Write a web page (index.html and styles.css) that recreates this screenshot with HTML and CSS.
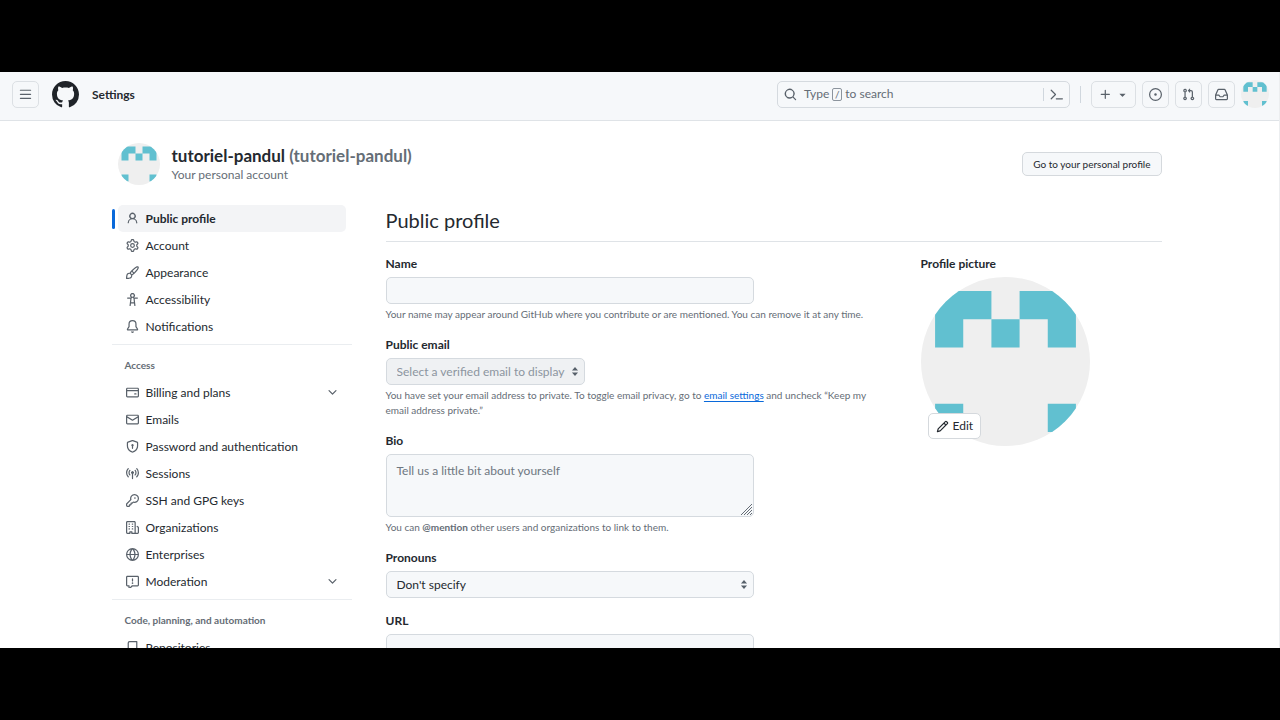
FILE: index.html
```html
<!DOCTYPE html>
<html lang="en">
<head>
<meta charset="utf-8">
<title>Public profile</title>
<link rel="stylesheet" href="styles.css">
</head>
<body>
<svg class="defs" aria-hidden="true">
  <defs>
    <symbol id="identicon" viewBox="0 0 420 420">
      <rect width="420" height="420" fill="#efefef"/>
      <path fill="#61c0d0" d="M35 35h140v70h-70v70H35zM245 35h140v140h-70v-70h-70zM175 105h70v70h-70zM35 315h70v70H35zM315 315h70v70h-70z"/>
    </symbol>
    <symbol id="chevron" viewBox="0 0 16 16"><path d="M12.78 5.22a.749.749 0 0 1 0 1.06l-4.25 4.25a.749.749 0 0 1-1.06 0L3.22 6.28a.749.749 0 1 1 1.06-1.06L8 8.939l3.72-3.719a.749.749 0 0 1 1.06 0Z"/></symbol>
    <symbol id="updown" viewBox="0 0 8 10"><path d="M4 0l3.4 4H.6zM4 10L.6 6h6.8z"/></symbol>
  </defs>
</svg>
<div class="frame">
  <header class="topbar">
    <button class="icon-btn" aria-label="Open menu"><svg class="icon" viewBox="0 0 16 16"><path d="M1 2.75A.75.75 0 0 1 1.75 2h12.5a.75.75 0 0 1 0 1.5H1.75A.75.75 0 0 1 1 2.75Zm0 5A.75.75 0 0 1 1.75 7h12.5a.75.75 0 0 1 0 1.5H1.75A.75.75 0 0 1 1 7.75ZM1.75 12h12.5a.75.75 0 0 1 0 1.5H1.75a.75.75 0 0 1 0-1.5Z"/></svg></button>
    <a class="logo" href="#" aria-label="Homepage"><svg viewBox="0 0 16 16"><path d="M8 0c4.42 0 8 3.58 8 8a8.013 8.013 0 0 1-5.45 7.59c-.4.08-.55-.17-.55-.38 0-.27.01-1.13.01-2.2 0-.75-.25-1.23-.54-1.48 1.78-.2 3.65-.88 3.65-3.95 0-.88-.31-1.59-.82-2.15.08-.2.36-1.02-.08-2.12 0 0-.67-.22-2.2.82-.64-.18-1.32-.27-2-.27-.68 0-1.36.09-2 .27-1.53-1.03-2.2-.82-2.2-.82-.44 1.1-.16 1.92-.08 2.12-.51.56-.82 1.28-.82 2.15 0 3.06 1.86 3.75 3.64 3.95-.23.2-.44.55-.51 1.07-.46.21-1.61.55-2.33-.66-.15-.24-.6-.83-1.23-.82-.67.01-.27.38.01.53.34.19.73.9.82 1.13.16.45.68 1.31 2.69.94 0 .67.01 1.3.01 1.49 0 .21-.15.45-.55.38A7.995 7.995 0 0 1 0 8c0-4.42 3.58-8 8-8Z"/></svg></a>
    <a class="crumb" href="#">Settings</a>
    <div class="search">
      <button class="search-main"><svg class="icon" viewBox="0 0 16 16"><path d="M10.68 11.74a6 6 0 0 1-7.922-8.982 6 6 0 0 1 8.982 7.922l3.04 3.04a.749.749 0 1 1-1.06 1.06ZM11.5 7a4.499 4.499 0 1 0-8.997 0A4.499 4.499 0 0 0 11.5 7Z"/></svg><span class="search-text">Type <kbd>/</kbd> to search</span></button>
      <button class="search-cmd" aria-label="Command palette"><svg class="icon" viewBox="0 0 16 16"><path d="M.97 2.22a.75.75 0 0 1 1.06 0l5.25 5.25a.75.75 0 0 1 0 1.06l-5.25 5.25a.75.75 0 0 1-1.06-1.06L5.69 8 .97 3.28a.75.75 0 0 1 0-1.06ZM7.75 12.5h7.5a.75.75 0 0 1 0 1.5h-7.5a.75.75 0 0 1 0-1.5Z"/></svg></button>
    </div>
    <span class="divider"></span>
    <nav class="actions">
      <button class="icon-btn wide" aria-label="Create new"><svg class="icon" viewBox="0 0 16 16"><path d="M7.75 2a.75.75 0 0 1 .75.75V7h4.25a.75.75 0 0 1 0 1.5H8.5v4.25a.75.75 0 0 1-1.5 0V8.5H2.75a.75.75 0 0 1 0-1.5H7V2.75A.75.75 0 0 1 7.75 2Z"/></svg><svg class="icon" viewBox="0 0 16 16"><path d="m4.427 7.427 3.396 3.396a.25.25 0 0 0 .354 0l3.396-3.396A.25.25 0 0 0 11.396 7H4.604a.25.25 0 0 0-.177.427Z"/></svg></button>
      <button class="icon-btn" aria-label="Issues"><svg class="icon" viewBox="0 0 16 16"><path d="M8 9.5a1.5 1.5 0 1 0 0-3 1.5 1.5 0 0 0 0 3Z"/><path d="M8 0a8 8 0 1 1 0 16A8 8 0 0 1 8 0ZM1.5 8a6.5 6.5 0 1 0 13 0 6.5 6.5 0 0 0-13 0Z"/></svg></button>
      <button class="icon-btn" aria-label="Pull requests"><svg class="icon" viewBox="0 0 16 16"><path d="M1.5 3.25a2.25 2.25 0 1 1 3 2.122v5.256a2.251 2.251 0 1 1-1.5 0V5.372A2.25 2.25 0 0 1 1.5 3.25Zm5.677-.177L9.573.677A.25.25 0 0 1 10 .854V2.5h1A2.5 2.5 0 0 1 13.5 5v5.628a2.251 2.251 0 1 1-1.5 0V5a1 1 0 0 0-1-1h-1v1.646a.25.25 0 0 1-.427.177L7.177 3.427a.25.25 0 0 1 0-.354ZM3.75 2.5a.75.75 0 1 0 0 1.5.75.75 0 0 0 0-1.5Zm0 9.5a.75.75 0 1 0 0 1.5.75.75 0 0 0 0-1.5Zm8.25.75a.75.75 0 1 0 1.5 0 .75.75 0 0 0-1.5 0Z"/></svg></button>
      <button class="icon-btn" aria-label="Notifications inbox"><svg class="icon" viewBox="0 0 16 16"><path d="M2.8 2.06A1.75 1.75 0 0 1 4.41 1h7.18c.7 0 1.333.417 1.61 1.06l2.74 6.395c.04.093.06.194.06.295v4.5A1.75 1.75 0 0 1 14.25 15H1.75A1.75 1.75 0 0 1 0 13.25v-4.5c0-.101.02-.202.06-.295Zm1.61.44a.25.25 0 0 0-.23.152L1.887 8H4.75a.75.75 0 0 1 .6.3L6.625 10h2.75l1.275-1.7a.75.75 0 0 1 .6-.3h2.863L11.82 2.652a.25.25 0 0 0-.23-.152Zm10.09 7h-2.875l-1.275 1.7a.75.75 0 0 1-.6.3h-3.5a.75.75 0 0 1-.6-.3L4.375 9.5H1.5v3.75c0 .138.112.25.25.25h12.5a.25.25 0 0 0 .25-.25Z"/></svg></button>
      <button class="avatar-btn" aria-label="User menu"><svg class="avatar"><use href="#identicon"/></svg></button>
    </nav>
  </header>

  <div class="page">
    <section class="account">
      <svg class="avatar medium"><use href="#identicon"/></svg>
      <div class="account-names">
        <h1>tutoriel-pandul <span>(tutoriel-pandul)</span></h1>
        <p>Your personal account</p>
      </div>
      <a class="btn" href="#">Go to your personal profile</a>
    </section>

    <div class="columns">
      <nav class="sidebar" aria-label="Settings">
        <ul>
          <li><a class="item active" href="#"><svg class="icon" viewBox="0 0 16 16"><path d="M10.561 8.073a6.005 6.005 0 0 1 3.432 5.142.75.75 0 1 1-1.498.07 4.5 4.5 0 0 0-8.99 0 .75.75 0 0 1-1.498-.07 6.004 6.004 0 0 1 3.431-5.142 3.999 3.999 0 1 1 5.123 0ZM10.5 5a2.5 2.5 0 1 0-5 0 2.5 2.5 0 0 0 5 0Z"/></svg><span>Public profile</span></a></li>
          <li><a class="item" href="#"><svg class="icon" viewBox="0 0 16 16"><path d="M8 0a8.2 8.2 0 0 1 .701.031C9.444.095 9.99.645 10.16 1.29l.288 1.107c.018.066.079.158.212.224.231.114.454.243.668.386.123.082.233.09.299.071l1.103-.303c.644-.176 1.392.021 1.82.63.27.385.506.792.704 1.218.315.675.111 1.422-.364 1.891l-.814.806c-.049.048-.098.147-.088.294.016.257.016.515 0 .772-.01.147.038.246.088.294l.814.806c.475.469.679 1.216.364 1.891a7.977 7.977 0 0 1-.704 1.217c-.428.61-1.176.807-1.82.63l-1.102-.302c-.067-.019-.177-.011-.3.071a5.909 5.909 0 0 1-.668.386c-.133.066-.194.158-.211.224l-.29 1.106c-.168.646-.715 1.196-1.458 1.26a8.006 8.006 0 0 1-1.402 0c-.743-.064-1.289-.614-1.458-1.26l-.289-1.106c-.018-.066-.079-.158-.212-.224a5.738 5.738 0 0 1-.668-.386c-.123-.082-.233-.09-.299-.071l-1.103.303c-.644.176-1.392-.021-1.82-.63a8.12 8.12 0 0 1-.704-1.218c-.315-.675-.111-1.422.363-1.891l.815-.806c.05-.048.098-.147.088-.294a6.214 6.214 0 0 1 0-.772c.01-.147-.038-.246-.088-.294l-.815-.806C.635 6.045.431 5.298.746 4.623a7.92 7.92 0 0 1 .704-1.217c.428-.61 1.176-.807 1.82-.63l1.102.302c.067.019.177.011.3-.071.214-.143.437-.272.668-.386.133-.066.194-.158.211-.224l.29-1.106C6.009.645 6.556.095 7.299.03 7.53.01 7.764 0 8 0Zm-.571 1.525c-.036.003-.108.036-.137.146l-.289 1.105c-.147.561-.549.967-.998 1.189-.173.086-.34.183-.5.29-.417.278-.97.423-1.529.27l-1.103-.303c-.109-.03-.175.016-.195.045-.22.312-.412.644-.573.99-.014.031-.021.11.059.19l.815.806c.411.406.562.957.53 1.456a4.709 4.709 0 0 0 0 .582c.032.499-.119 1.05-.53 1.456l-.815.806c-.081.08-.073.159-.059.19.162.346.353.677.573.989.02.03.085.076.195.046l1.102-.303c.56-.153 1.113-.008 1.53.27.161.107.328.204.501.29.447.222.85.629.997 1.189l.289 1.105c.029.109.101.143.137.146a6.6 6.6 0 0 0 1.142 0c.036-.003.108-.036.137-.146l.289-1.105c.147-.561.549-.967.998-1.189.173-.086.34-.183.5-.29.417-.278.97-.423 1.529-.27l1.103.303c.109.029.175-.016.195-.045.22-.313.411-.644.573-.99.014-.031.021-.11-.059-.19l-.815-.806c-.411-.406-.562-.957-.53-1.456a4.709 4.709 0 0 0 0-.582c-.032-.499.119-1.05.53-1.456l.815-.806c.081-.08.073-.159.059-.19a6.464 6.464 0 0 0-.573-.989c-.02-.03-.085-.076-.195-.046l-1.102.303c-.56.153-1.113.008-1.53-.27a4.44 4.44 0 0 0-.501-.29c-.447-.222-.85-.629-.997-1.189l-.289-1.105c-.029-.11-.101-.143-.137-.146a6.6 6.6 0 0 0-1.142 0ZM11 8a3 3 0 1 1-6 0 3 3 0 0 1 6 0ZM9.5 8a1.5 1.5 0 1 0-3.001.001A1.5 1.5 0 0 0 9.5 8Z"/></svg><span>Account</span></a></li>
          <li><a class="item" href="#"><svg class="icon" viewBox="0 0 16 16"><path d="M11.134 1.535c.7-.509 1.416-.942 2.076-1.155.649-.21 1.463-.267 2.069.34.603.601.568 1.411.368 2.07-.202.668-.624 1.39-1.125 2.096-1.011 1.424-2.496 2.987-3.775 4.249-1.098 1.084-2.132 1.839-3.04 2.3a3.744 3.744 0 0 1-1.055 3.217c-.431.431-1.065.691-1.657.861-.614.177-1.294.287-1.914.357A21.151 21.151 0 0 1 .797 16H.743l.007-.75H.749L.742 16a.75.75 0 0 1-.743-.742l.743-.008-.742.007v-.054a21.25 21.25 0 0 1 .13-2.284c.067-.647.187-1.287.358-1.914.17-.591.43-1.226.86-1.657a3.746 3.746 0 0 1 3.227-1.054c.466-.893 1.225-1.907 2.314-2.982 1.271-1.255 2.833-2.75 4.245-3.777ZM1.62 13.089c-.051.464-.086.929-.104 1.395.466-.018.932-.053 1.396-.104a10.511 10.511 0 0 0 1.668-.309c.526-.151.856-.325 1.011-.48a2.25 2.25 0 1 0-3.182-3.182c-.155.155-.329.485-.48 1.01a10.515 10.515 0 0 0-.309 1.67Zm10.396-10.34c-1.224.89-2.605 2.189-3.822 3.384l1.718 1.718c1.21-1.205 2.51-2.597 3.387-3.833.47-.662.78-1.227.912-1.662.134-.444.032-.551.009-.575h-.001V1.78c-.014-.014-.113-.113-.548.027-.432.14-.995.462-1.655.942Zm-4.832 7.266-.001.001a9.859 9.859 0 0 0 1.63-1.142L7.155 7.216a9.7 9.7 0 0 0-1.161 1.607c.482.302.889.71 1.19 1.192Z"/></svg><span>Appearance</span></a></li>
          <li><a class="item" href="#"><svg class="icon" viewBox="0 0 16 16"><path d="M9.923 5.302c.063.063.122.129.178.198H14A.75.75 0 0 1 14 7h-3.3l.578 5.163.362 2.997a.75.75 0 0 1-1.49.18L9.868 13H6.132l-.282 2.34a.75.75 0 0 1-1.49-.18l.362-2.997L5.3 7H2a.75.75 0 0 1 0-1.5h3.9a2.54 2.54 0 0 1 .176-.198 3 3 0 1 1 3.847 0ZM9.2 7.073h-.001a1.206 1.206 0 0 0-2.398 0L6.305 11.5h3.39ZM9.5 3a1.5 1.5 0 1 0-3.001.001A1.5 1.5 0 0 0 9.5 3Z"/></svg><span>Accessibility</span></a></li>
          <li><a class="item" href="#"><svg class="icon" viewBox="0 0 16 16"><path d="M8 16a2 2 0 0 0 1.985-1.75c.017-.137-.097-.25-.235-.25h-3.5c-.138 0-.252.113-.235.25A2 2 0 0 0 8 16ZM3 5a5 5 0 0 1 10 0v2.947c0 .05.015.098.042.139l1.703 2.555A1.519 1.519 0 0 1 13.482 13H2.518a1.516 1.516 0 0 1-1.263-2.36l1.703-2.554A.255.255 0 0 0 3 7.947Zm5-3.5A3.5 3.5 0 0 0 4.5 5v2.947c0 .346-.102.683-.294.97l-1.703 2.556a.017.017 0 0 0-.003.01l.001.006c0 .002.002.004.004.006l.006.004.007.001h10.964l.007-.001.006-.004.004-.006.001-.007a.017.017 0 0 0-.003-.01l-1.703-2.554a1.745 1.745 0 0 1-.294-.97V5A3.5 3.5 0 0 0 8 1.5Z"/></svg><span>Notifications</span></a></li>
        </ul>
        <h2>Access</h2>
        <ul>
          <li><a class="item" href="#"><svg class="icon" viewBox="0 0 16 16"><path d="M10.75 9a.75.75 0 0 0 0 1.5h1.5a.75.75 0 0 0 0-1.5h-1.5Z"/><path d="M0 3.75C0 2.784.784 2 1.75 2h12.5c.966 0 1.75.784 1.75 1.75v8.5A1.75 1.75 0 0 1 14.25 14H1.75A1.75 1.75 0 0 1 0 12.25ZM14.5 6.5h-13v5.75c0 .138.112.25.25.25h12.5a.25.25 0 0 0 .25-.25Zm0-2.75a.25.25 0 0 0-.25-.25H1.75a.25.25 0 0 0-.25.25V5h13Z"/></svg><span>Billing and plans</span><svg class="icon caret"><use href="#chevron"/></svg></a></li>
          <li><a class="item" href="#"><svg class="icon" viewBox="0 0 16 16"><path d="M1.75 2h12.5c.966 0 1.75.784 1.75 1.75v8.5A1.75 1.75 0 0 1 14.25 14H1.75A1.75 1.75 0 0 1 0 12.25v-8.5C0 2.784.784 2 1.75 2ZM1.5 12.251c0 .138.112.25.25.25h12.5a.25.25 0 0 0 .25-.25V5.809L8.38 9.397a.75.75 0 0 1-.76 0L1.5 5.809v6.442Zm13-8.181v-.32a.25.25 0 0 0-.25-.25H1.75a.25.25 0 0 0-.25.25v.32L8 7.88Z"/></svg><span>Emails</span></a></li>
          <li><a class="item" href="#"><svg class="icon" viewBox="0 0 16 16"><path d="m8.533.133 5.25 1.68A1.75 1.75 0 0 1 15 3.48V7c0 1.566-.32 3.182-1.303 4.682-.983 1.498-2.585 2.813-5.032 3.855a1.697 1.697 0 0 1-1.33 0c-2.447-1.042-4.049-2.357-5.032-3.855C1.32 10.182 1 8.566 1 7V3.48a1.75 1.75 0 0 1 1.217-1.667l5.25-1.68a1.748 1.748 0 0 1 1.066 0Zm-.61 1.429.001.001-5.25 1.68a.251.251 0 0 0-.174.237V7c0 1.36.275 2.666 1.057 3.859.784 1.194 2.121 2.342 4.366 3.298a.196.196 0 0 0 .154 0c2.245-.957 3.582-2.103 4.366-3.297C13.225 9.666 13.5 8.358 13.5 7V3.48a.25.25 0 0 0-.174-.238l-5.25-1.68a.25.25 0 0 0-.153 0ZM9.5 6.5c0 .536-.286 1.032-.75 1.3v2.45a.75.75 0 0 1-1.5 0V7.8A1.5 1.5 0 1 1 9.5 6.5Z"/></svg><span>Password and authentication</span></a></li>
          <li><a class="item" href="#"><svg class="icon" viewBox="0 0 16 16"><path d="M8.75 8.582v5.668a.75.75 0 0 1-1.5 0V8.582a1.75 1.75 0 1 1 1.5 0Zm3.983-7.125a.75.75 0 0 1 1.06.026A7.976 7.976 0 0 1 16 7c0 2.139-.84 4.083-2.207 5.517a.75.75 0 1 1-1.086-1.034A6.474 6.474 0 0 0 14.5 7a6.474 6.474 0 0 0-1.793-4.483.75.75 0 0 1 .026-1.06Zm-9.466 0c.3.286.312.76.026 1.06A6.474 6.474 0 0 0 1.5 7a6.47 6.47 0 0 0 1.793 4.483.75.75 0 0 1-1.086 1.034A7.973 7.973 0 0 1 0 7c0-2.139.84-4.083 2.207-5.517a.75.75 0 0 1 1.06-.026Zm8.556 2.321A4.988 4.988 0 0 1 13 7a4.988 4.988 0 0 1-1.177 3.222.75.75 0 1 1-1.146-.967A3.487 3.487 0 0 0 11.5 7c0-.86-.309-1.645-.823-2.255a.75.75 0 0 1 1.146-.967Zm-6.492.958A3.48 3.48 0 0 0 4.5 7a3.48 3.48 0 0 0 .823 2.255.75.75 0 0 1-1.146.967A4.981 4.981 0 0 1 3 7a4.982 4.982 0 0 1 1.188-3.236.75.75 0 1 1 1.143.972Z"/></svg><span>Sessions</span></a></li>
          <li><a class="item" href="#"><svg class="icon" viewBox="0 0 16 16"><path d="M10.5 0a5.499 5.499 0 1 1-1.288 10.848l-.932.932a.749.749 0 0 1-.53.22H7v.75a.749.749 0 0 1-.22.53l-.5.5a.749.749 0 0 1-.53.22H5v.75a.749.749 0 0 1-.22.53l-.5.5a.749.749 0 0 1-.53.22h-2A1.75 1.75 0 0 1 0 14.25v-2c0-.199.079-.389.22-.53l4.932-4.932A5.5 5.5 0 0 1 10.5 0Zm-4 5.5c-.001.431.069.86.205 1.269a.75.75 0 0 1-.181.768L1.5 12.56v1.69c0 .138.112.25.25.25h1.69l.06-.06v-1.19a.75.75 0 0 1 .75-.75h1.19l.06-.06v-1.19a.75.75 0 0 1 .75-.75h1.19l1.023-1.025a.75.75 0 0 1 .768-.18A4 4 0 1 0 6.5 5.5ZM11 6a1 1 0 1 1 0-2 1 1 0 0 1 0 2Z"/></svg><span>SSH and GPG keys</span></a></li>
          <li><a class="item" href="#"><svg class="icon" viewBox="0 0 16 16"><path d="M1.75 16A1.75 1.75 0 0 1 0 14.25V1.75C0 .784.784 0 1.75 0h8.5C11.216 0 12 .784 12 1.75v12.5c0 .085-.006.168-.018.25h2.268a.25.25 0 0 0 .25-.25V8.285a.25.25 0 0 0-.111-.208l-1.055-.703a.749.749 0 1 1 .832-1.248l1.055.703c.487.325.779.871.779 1.456v5.965A1.75 1.75 0 0 1 14.25 16h-3.5a.766.766 0 0 1-.197-.026c-.099.017-.2.026-.303.026h-3a.75.75 0 0 1-.75-.75V14h-1v1.25a.75.75 0 0 1-.75.75Zm-.25-1.75c0 .138.112.25.25.25H4v-1.25a.75.75 0 0 1 .75-.75h2.5a.75.75 0 0 1 .75.75v1.25h2.25a.25.25 0 0 0 .25-.25V1.75a.25.25 0 0 0-.25-.25h-8.5a.25.25 0 0 0-.25.25ZM3.75 6h.5a.75.75 0 0 1 0 1.5h-.5a.75.75 0 0 1 0-1.5ZM3 3.75A.75.75 0 0 1 3.75 3h.5a.75.75 0 0 1 0 1.5h-.5A.75.75 0 0 1 3 3.75Zm4 3A.75.75 0 0 1 7.75 6h.5a.75.75 0 0 1 0 1.5h-.5A.75.75 0 0 1 7 6.75ZM7.75 3h.5a.75.75 0 0 1 0 1.5h-.5a.75.75 0 0 1 0-1.5ZM3 9.75A.75.75 0 0 1 3.75 9h.5a.75.75 0 0 1 0 1.5h-.5A.75.75 0 0 1 3 9.75ZM7.75 9h.5a.75.75 0 0 1 0 1.5h-.5a.75.75 0 0 1 0-1.5Z"/></svg><span>Organizations</span></a></li>
          <li><a class="item" href="#"><svg class="icon" viewBox="0 0 16 16"><path d="M8 0a8 8 0 1 1 0 16A8 8 0 0 1 8 0ZM5.78 8.75a9.64 9.64 0 0 0 1.363 4.177c.255.426.542.832.857 1.215.245-.296.551-.705.857-1.215A9.64 9.64 0 0 0 10.22 8.75Zm4.44-1.5a9.64 9.64 0 0 0-1.363-4.177c-.307-.51-.612-.919-.857-1.215a9.927 9.927 0 0 0-.857 1.215A9.64 9.64 0 0 0 5.78 7.25Zm-5.944 1.5H1.543a6.507 6.507 0 0 0 4.666 5.5c-.123-.181-.24-.365-.352-.552-.715-1.192-1.437-2.874-1.581-4.948Zm-2.733-1.5h2.733c.144-2.074.866-3.756 1.58-4.948.12-.197.237-.381.353-.552a6.507 6.507 0 0 0-4.666 5.5Zm10.181 1.5c-.144 2.074-.866 3.756-1.58 4.948-.12.197-.237.381-.353.552a6.507 6.507 0 0 0 4.666-5.5Zm2.733-1.5a6.507 6.507 0 0 0-4.666-5.5c.123.181.24.365.353.552.714 1.192 1.436 2.874 1.58 4.948Z"/></svg><span>Enterprises</span></a></li>
          <li><a class="item" href="#"><svg class="icon" viewBox="0 0 16 16"><path d="M0 2.75C0 1.784.784 1 1.75 1h12.5c.966 0 1.75.784 1.75 1.75v9.5A1.75 1.75 0 0 1 14.25 14H8.06l-2.573 2.573A1.458 1.458 0 0 1 3 15.543V14H1.75A1.75 1.75 0 0 1 0 12.25Zm1.75-.25a.25.25 0 0 0-.25.25v9.5c0 .138.112.25.25.25h2a.75.75 0 0 1 .75.75v2.19l2.72-2.72a.749.749 0 0 1 .53-.22h6.5a.25.25 0 0 0 .25-.25v-9.5a.25.25 0 0 0-.25-.25Zm7 2.25v2.5a.75.75 0 0 1-1.5 0v-2.5a.75.75 0 0 1 1.5 0ZM9 10a1 1 0 1 1-2 0 1 1 0 0 1 2 0Z"/></svg><span>Moderation</span><svg class="icon caret"><use href="#chevron"/></svg></a></li>
        </ul>
        <h2>Code, planning, and automation</h2>
        <ul>
          <li><a class="item" href="#"><svg class="icon" viewBox="0 0 16 16"><path d="M2 2.5A2.5 2.5 0 0 1 4.5 0h8.75a.75.75 0 0 1 .75.75v12.5a.75.75 0 0 1-.75.75h-2.5a.75.75 0 0 1 0-1.5h1.75v-2h-8a1 1 0 0 0-.714 1.7.75.75 0 1 1-1.072 1.05A2.495 2.495 0 0 1 2 11.5Zm10.5-1h-8a1 1 0 0 0-1 1v6.708A2.486 2.486 0 0 1 4.5 9h8Z"/></svg><span>Repositories</span></a></li>
        </ul>
      </nav>

      <main class="content">
        <h2 class="title">Public profile</h2>
        <div class="profile">
          <form class="form">
            <div class="field">
              <label for="name">Name</label>
              <input class="control" id="name" type="text">
              <p>Your name may appear around GitHub where you contribute or are mentioned. You can remove it at any time.</p>
            </div>
            <div class="field">
              <label for="email">Public email</label>
              <div class="stack fit">
                <select class="control" id="email" disabled><option>Select a verified email to display</option></select>
                <svg class="updown"><use href="#updown"/></svg>
              </div>
              <p>You have set your email address to private. To toggle email privacy, go to <a href="#">email settings</a> and uncheck “Keep my email address private.”</p>
            </div>
            <div class="field">
              <label for="bio">Bio</label>
              <div class="stack">
                <textarea class="control" id="bio" placeholder="Tell us a little bit about yourself"></textarea>
                <svg class="grip" viewBox="0 0 13 13"><path d="M1 12L12 1M4 12l8-8M7 12l5-5M10 12l2-2"/></svg>
              </div>
              <p>You can <b>@mention</b> other users and organizations to link to them.</p>
            </div>
            <div class="field">
              <label for="pronouns">Pronouns</label>
              <div class="stack">
                <select class="control" id="pronouns"><option>Don't specify</option></select>
                <svg class="updown"><use href="#updown"/></svg>
              </div>
            </div>
            <div class="field">
              <label for="url">URL</label>
              <input class="control" id="url" type="url">
            </div>
          </form>
          <aside class="picture">
            <h3>Profile picture</h3>
            <div class="picture-box">
              <svg class="avatar big"><use href="#identicon"/></svg>
              <button class="edit"><svg class="icon" viewBox="0 0 16 16"><path d="M11.013 1.427a1.75 1.75 0 0 1 2.474 0l1.086 1.086a1.75 1.75 0 0 1 0 2.474l-8.61 8.61c-.21.21-.47.364-.756.445l-3.251.93a.75.75 0 0 1-.927-.928l.929-3.25c.081-.286.235-.547.445-.758l8.61-8.61Zm.176 4.823L9.75 4.81l-6.286 6.287a.253.253 0 0 0-.064.108l-.558 1.953 1.953-.558a.253.253 0 0 0 .108-.064Zm1.238-3.763a.25.25 0 0 0-.354 0L10.811 3.75l1.439 1.44 1.263-1.263a.25.25 0 0 0 0-.354Z"/></svg>Edit</button>
            </div>
          </aside>
        </div>
      </main>
    </div>
  </div>
</div>
</body>
</html>
```
FILE: styles.css
```css
* { box-sizing: border-box; }

body {
  margin: 0;
  height: 100vh;
  padding: 72px 0;
  background: #000;
  color: #24292f;
  font: 12px/18px Lato, "Open Sans", sans-serif;
}

h1, h2, h3, p, ul { margin: 0; padding: 0; }
ul { list-style: none; }
a { color: inherit; text-decoration: none; }
button, input, select, textarea { font: inherit; color: inherit; margin: 0; }

.defs { position: absolute; width: 0; height: 0; }

.frame {
  height: 100%;
  overflow: hidden;
  background: #fff;
  border-right: 1px solid #eceef0;
}

.icon { width: 13px; height: 13px; flex: none; fill: #59616a; }
.avatar { display: block; width: 28px; height: 28px; border-radius: 50%; flex: none; }
.avatar.medium { width: 42px; height: 42px; }
.avatar.big { width: 169px; height: 169px; }

/* Top bar */
.topbar {
  display: flex;
  align-items: center;
  padding: 8px 10px 12px 12px;
  background: #f6f8fa;
  border-bottom: 1px solid #dfe3e7;
}
.icon-btn {
  display: flex;
  align-items: center;
  justify-content: center;
  width: 27px;
  height: 27px;
  padding: 0;
  background: #f6f8fa;
  border: 1px solid #dce0e4;
  border-radius: 5px;
}
.icon-btn.wide { width: 45px; gap: 4px; }
.logo { margin: 0 13px; }
.logo svg { display: block; width: 27px; height: 27px; fill: #1f2328; }
.crumb { padding-top: 2px; font-weight: 700; }
.search {
  display: flex;
  width: 293px;
  height: 27px;
  margin-left: auto;
  border: 1px solid #d5dadf;
  border-radius: 5px;
}
.search button { border: 0; padding: 0; background: none; display: flex; align-items: center; }
.search .search-main { flex: 1; gap: 7px; padding-left: 6px; color: #656d76; }
.search-text { display: flex; align-items: center; gap: 3px; }
kbd {
  width: 10px;
  height: 13px;
  border: 1px solid #8c949d;
  border-radius: 2px;
  font: 10px/11px Lato, sans-serif;
  text-align: center;
}
.search .search-cmd { width: 26px; height: 13px; margin: auto 0; justify-content: center; border-left: 1px solid #d0d7de; }
.divider { width: 1px; height: 17px; margin: 0 10px; background: #d0d7de; }
.actions { display: flex; gap: 6px; align-items: center; }
.avatar-btn { border: 0; padding: 0; background: none; }

/* Account heading */
.page { width: 100%; max-width: 1084px; margin: 0 auto; padding: 22px 20px 0; }
.account { display: flex; align-items: center; gap: 12px; }
.account-names { flex: 1; padding-top: 2px; }
.account h1 { font-size: 17px; line-height: 20px; font-weight: 700; }
.account h1 span { color: #656d76; }
.account p { color: #656d76; }
.btn {
  padding: 2px 10px;
  border: 1px solid #d5d9dd;
  border-radius: 5px;
  background: #f6f8fa;
  font-size: 10px;
}

/* Sidebar */
.columns {
  display: grid;
  grid-template-columns: 234px minmax(0, 1fr);
  gap: 34px;
  padding-top: 20px;
}
.sidebar { margin-left: -6px; }
.sidebar ul { padding: 0 6px; }
.sidebar h2 {
  margin-top: 4px;
  padding: 11px 13px 5px;
  border-top: 1px solid #eaedf0;
  font-size: 10px;
  font-weight: 700;
  color: #656d76;
}
.item {
  display: flex;
  align-items: center;
  gap: 7px;
  height: 27px;
  padding: 0 7px 0 8px;
  border-radius: 5px;
}
.item .caret { margin-left: auto; }
.item.active { position: relative; background: #f3f4f6; font-weight: 700; }
.item.active::before {
  content: "";
  position: absolute;
  left: -6px;
  width: 3px;
  height: 20px;
  border-radius: 2px;
  background: #0969da;
}

/* Profile form */
.title {
  padding-bottom: 6px;
  border-bottom: 1px solid #dfe3e7;
  font-size: 20px;
  line-height: 30px;
  font-weight: 400;
}
.profile {
  display: grid;
  grid-template-columns: minmax(0, 500px) 241px;
  justify-content: space-between;
  padding-top: 13px;
}
.form { display: grid; gap: 14px; }
.field { display: grid; justify-items: start; }
.field label, .picture h3 { margin-bottom: 4px; font-size: 12px; font-weight: 700; line-height: 18px; }
.field p { margin-top: 3px; font-size: 10px; line-height: 15px; color: #656d76; }
.field p a { color: #0969da; text-decoration: underline; text-underline-offset: 2px; }
.control {
  width: 100%;
  max-width: 368px;
  height: 27px;
  padding: 0 10px;
  border: 1px solid #d5dadf;
  border-radius: 5px;
  background: #f6f8fa;
}
select.control { appearance: none; }
select:disabled { color: #8c959f; background: #eff1f3; opacity: 1; padding-right: 18px; }
textarea.control { display: block; height: 63px; padding: 7px 10px; resize: none; }
textarea::placeholder { color: #6e7781; }
.stack { display: grid; width: 100%; max-width: 368px; }
.stack > * { grid-area: 1 / 1; }
.stack.fit { width: auto; }
.updown { width: 8px; height: 9px; margin-right: 6px; place-self: center end; fill: #57606a; pointer-events: none; }
.grip { width: 13px; height: 13px; margin: 1px; place-self: end; stroke: #656d76; fill: none; pointer-events: none; }

.picture-box { position: relative; }
.edit {
  position: absolute;
  left: 7px;
  bottom: 7px;
  display: flex;
  align-items: center;
  gap: 4px;
  height: 26px;
  padding: 0 7px;
  border: 1px solid #d5d9dd;
  border-radius: 5px;
  background: #fff;
}
.edit .icon { fill: #24292f; }
```
